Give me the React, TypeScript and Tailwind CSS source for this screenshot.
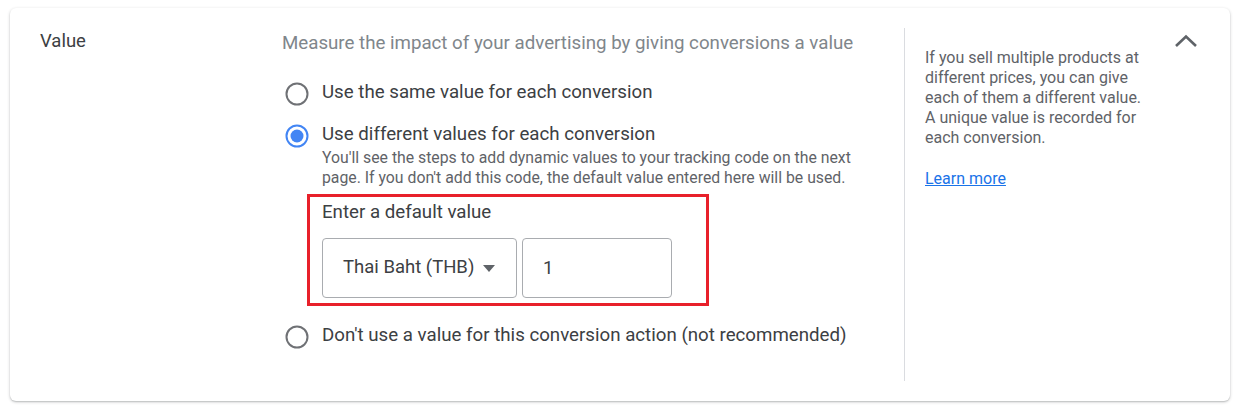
import { useState } from 'react';

type Choice = 'same' | 'different' | 'none';

function Radio({ checked }: { checked: boolean }) {
  return (
    <svg width="24" height="24" viewBox="0 0 24 24" className="shrink-0">
      <circle
        cx="12"
        cy="12"
        r="10.5"
        fill="none"
        stroke={checked ? '#4285f4' : '#6f7175'}
        strokeWidth="2"
      />
      {checked && <circle cx="12" cy="12" r="6.5" fill="#4285f4" />}
    </svg>
  );
}

function Option({
  label,
  checked,
  onSelect,
  children,
}: {
  label: string;
  checked: boolean;
  onSelect: () => void;
  children?: React.ReactNode;
}) {
  return (
    <div className="flex items-start">
      <button type="button" onClick={onSelect} className="mt-[2px] ml-[3px] mr-[13px]">
        <Radio checked={checked} />
      </button>
      <div className="flex flex-col">
        <span className="text-[18.7px] leading-[24px] text-[#3c4043]">{label}</span>
        {children}
      </div>
    </div>
  );
}

export default function App() {
  const [choice, setChoice] = useState<Choice>('different');
  const [amount, setAmount] = useState('1');

  return (
    <div className="bg-white w-[1240px] h-[412px] pt-[8px] pl-[10px] font-['Roboto',sans-serif]">
      <div className="w-[1220px] h-[393px] bg-white rounded-[6px] shadow-[0_1px_3px_rgba(60,64,67,0.3),0_1px_1px_rgba(60,64,67,0.12)] flex">
        {/* label */}
        <div className="w-[272px] pl-[30px] pt-[21px] shrink-0">
          <h2 className="text-[18.5px] leading-[24px] text-[#3c4043]">Value</h2>
        </div>

        {/* options */}
        <div className="w-[622px] pt-[23px] shrink-0">
          <p className="text-[18.7px] leading-[24px] text-[#80868b]">
            Measure the impact of your advertising by giving conversions a value
          </p>

          <div className="mt-[25px] flex flex-col">
            <Option
              label="Use the same value for each conversion"
              checked={choice === 'same'}
              onSelect={() => setChoice('same')}
            />
            <div className="mt-[16px]">
              <Option
                label="Use different values for each conversion"
                checked={choice === 'different'}
                onSelect={() => setChoice('different')}
              >
                <p className="mt-[2px] text-[15.8px] leading-[20px] text-[#5f6368] w-[545px]">
                  You'll see the steps to add dynamic values to your tracking code on the next
                  page. If you don't add this code, the default value entered here will be used.
                </p>
              </Option>
            </div>

            <div className="ml-[25px] mt-[6px] w-[402px] h-[112px] border-[3px] border-[#e8202a] pl-[12px] pt-[3px]">
              <div className="text-[18.7px] leading-[24px] text-[#3c4043]">Enter a default value</div>
              <div className="mt-[14px] flex gap-[5px]">
                <button
                  type="button"
                  className="w-[195px] h-[60px] border border-[#a9acb0] rounded-[4px] flex items-center pl-[20px] text-[18.5px] text-[#3c4043]"
                >
                  Thai Baht (THB)
                  <svg width="12" height="7" viewBox="0 0 12 7" className="ml-[9px]">
                    <path d="M0 0h12L6 7z" fill="#5f6368" />
                  </svg>
                </button>
                <input
                  value={amount}
                  onChange={(e) => setAmount(e.target.value)}
                  className="w-[150px] h-[60px] border border-[#a9acb0] rounded-[4px] pl-[20px] text-[18.5px] text-[#3c4043] outline-none"
                />
              </div>
            </div>

            <div className="mt-[17px]">
              <Option
                label="Don't use a value for this conversion action (not recommended)"
                checked={choice === 'none'}
                onSelect={() => setChoice('none')}
              />
            </div>
          </div>
        </div>

        {/* help */}
        <div className="my-[20px] flex-1 border-l border-[#dadce0] pl-[20px] pr-[32px] flex justify-between items-start">
          <div className="w-[222px] pt-[20px] text-[16px] leading-[20px] text-[#5f6368]">
            <p>
              If you sell multiple products at different prices, you can give each of them a
              different value. A unique value is recorded for each conversion.
            </p>
            <a href="#" className="block mt-[21px] text-[#1a73e8] underline">
              Learn more
            </a>
          </div>
          <button type="button" className="mt-[5px]">
            <svg width="24" height="16" viewBox="0 0 24 16">
              <polyline
                points="2,13 12,3.5 22,13"
                fill="none"
                stroke="#5f6368"
                strokeWidth="2.6"
              />
            </svg>
          </button>
        </div>
      </div>
    </div>
  );
}
